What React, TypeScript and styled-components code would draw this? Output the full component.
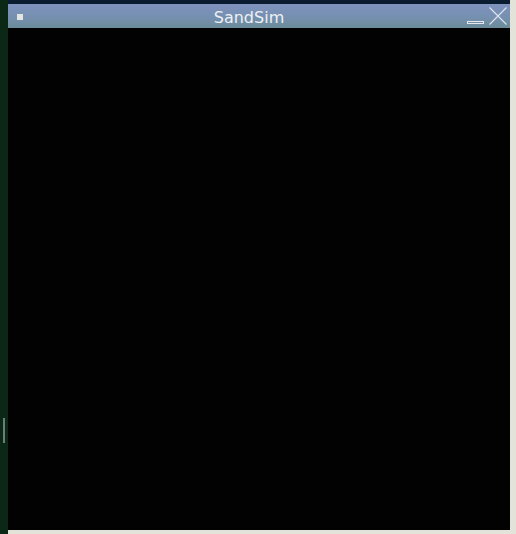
import React from "react";
import styled, { createGlobalStyle } from "styled-components";

const Global = createGlobalStyle`
  html, body { margin: 0; padding: 0; background: #000; }
  body { font-family: "DejaVu Sans", "Liberation Sans", sans-serif; }
`;

const Screen = styled.div`
  display: flex;
  width: 516px;
  height: 534px;
  overflow: hidden;
`;

const LeftEdge = styled.div`
  position: relative;
  width: 8px;
  flex: none;
  background: #0b2816;
`;

const Grip = styled.div`
  position: absolute;
  left: 3px;
  top: 418px;
  width: 2px;
  height: 25px;
  background: #6e7c78;
`;

const RightEdge = styled.div`
  width: 6px;
  flex: none;
  background: #e3e3da;
`;

const Column = styled.div`
  flex: 1;
  display: flex;
  flex-direction: column;
  min-width: 0;
`;

const Edge = styled.div<{ $light?: boolean }>`
  height: 4px;
  flex: none;
  background: ${(p) => (p.$light ? "#e3e3da" : "#0c1c30")};
`;

const TitleBar = styled.div`
  height: 24px;
  flex: none;
  display: flex;
  align-items: center;
  position: relative;
  background: linear-gradient(#7f92be, #7590b0 55%, #6c8c98);
  color: #eef0f4;
`;

const MenuBox = styled.div`
  width: 6px;
  height: 6px;
  margin-left: 9px;
  margin-top: 1px;
  background: #e4e4e0;
`;

const Title = styled.div`
  position: absolute;
  left: 0;
  right: 0;
  top: 0;
  bottom: 0;
  display: flex;
  align-items: center;
  justify-content: center;
  font-size: 16px;
  padding-right: 20px;
  padding-top: 2px;
  pointer-events: none;
`;

const Controls = styled.div`
  margin-left: auto;
  display: flex;
  align-items: flex-end;
  height: 100%;
  gap: 4px;
  margin-right: 2px;
`;

const MinBtn = styled.div`
  width: 15px;
  height: 1px;
  border: 1px solid #e6e8ee;
  margin-bottom: 4px;
`;

const CloseIcon = styled.svg`
  width: 20px;
  height: 20px;
  margin-bottom: 2px;
`;

const Canvas = styled.div`
  flex: 1;
  background: #020202;
`;

export default function App() {
  return (
    <>
      <Global />
      <Screen>
        <LeftEdge>
          <Grip />
        </LeftEdge>
        <Column>
          <Edge />
          <TitleBar>
            <MenuBox />
            <Title>SandSim</Title>
            <Controls>
              <MinBtn />
              <CloseIcon viewBox="0 0 20 20">
                <path d="M1.5 1.5 L18.5 18.5 M18.5 1.5 L1.5 18.5" stroke="#dfe4ee" strokeWidth="1.1" fill="none" />
              </CloseIcon>
            </Controls>
          </TitleBar>
          <Canvas />
          <Edge $light />
        </Column>
        <RightEdge />
      </Screen>
    </>
  );
}
